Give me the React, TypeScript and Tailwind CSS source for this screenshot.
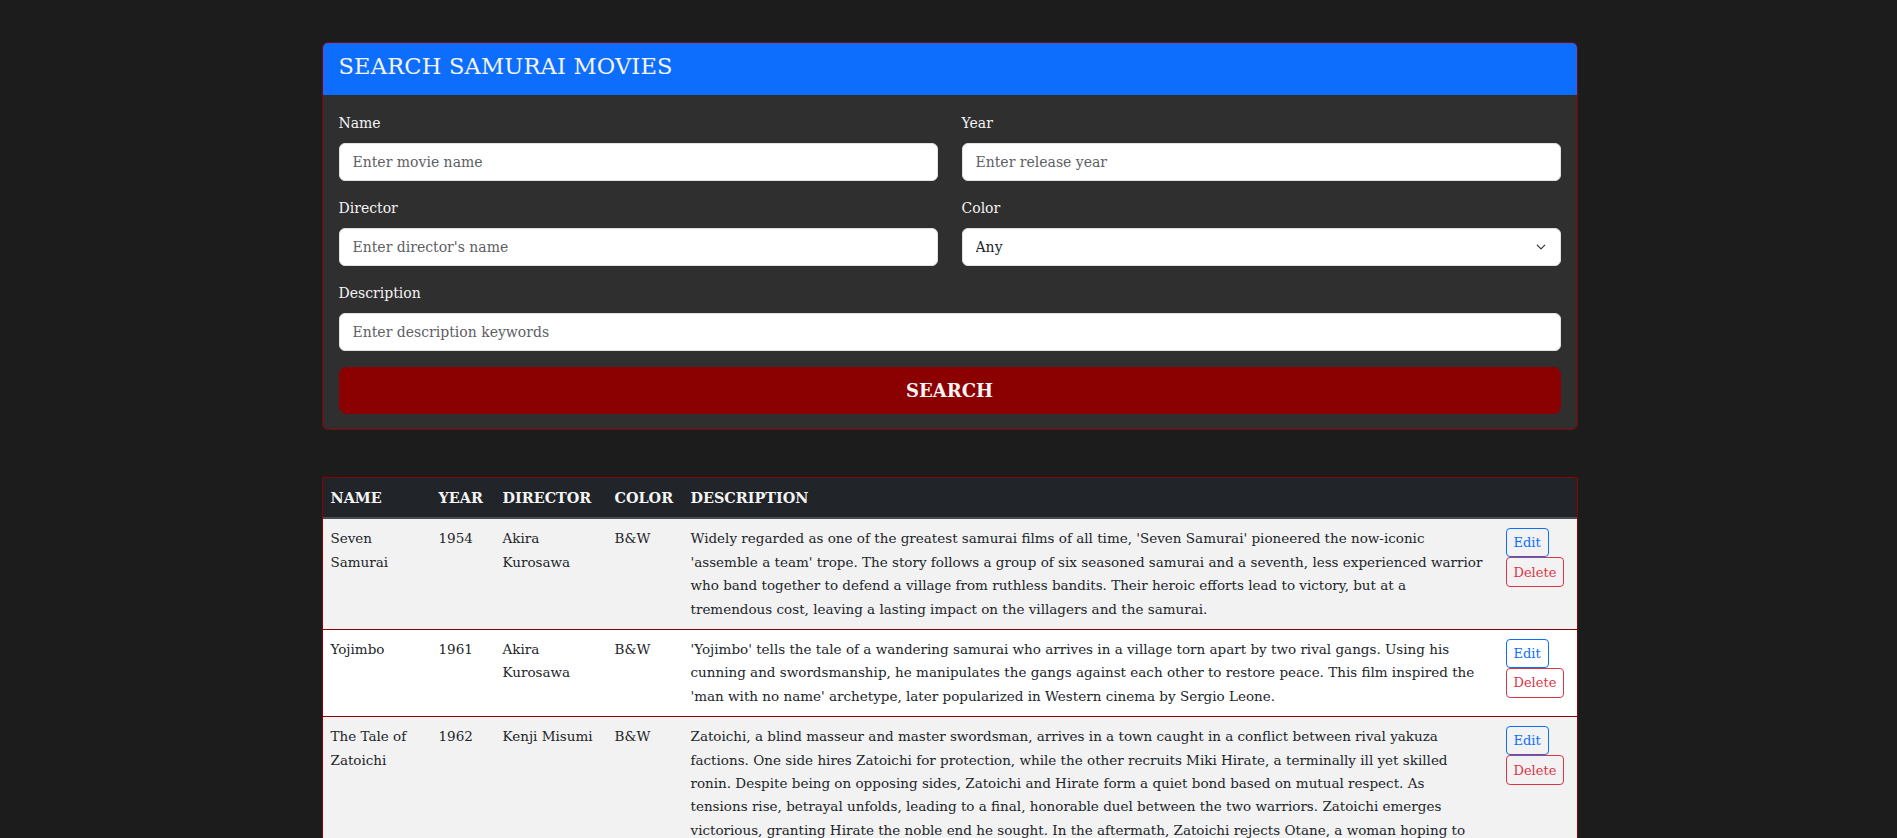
import React from "react";

const font = { fontFamily: '"DejaVu Serif", Georgia, serif' };

type Movie = { name: string; year: string; director: string; color: string; lines: string[] };

const movies: Movie[] = [
  {
    name: "Seven Samurai",
    year: "1954",
    director: "Akira Kurosawa",
    color: "B&W",
    lines: [
      "Widely regarded as one of the greatest samurai films of all time, 'Seven Samurai' pioneered the now-iconic",
      "'assemble a team' trope. The story follows a group of six seasoned samurai and a seventh, less experienced warrior",
      "who band together to defend a village from ruthless bandits. Their heroic efforts lead to victory, but at a",
      "tremendous cost, leaving a lasting impact on the villagers and the samurai.",
    ],
  },
  {
    name: "Yojimbo",
    year: "1961",
    director: "Akira Kurosawa",
    color: "B&W",
    lines: [
      "'Yojimbo' tells the tale of a wandering samurai who arrives in a village torn apart by two rival gangs. Using his",
      "cunning and swordsmanship, he manipulates the gangs against each other to restore peace. This film inspired the",
      "'man with no name' archetype, later popularized in Western cinema by Sergio Leone.",
    ],
  },
  {
    name: "The Tale of Zatoichi",
    year: "1962",
    director: "Kenji Misumi",
    color: "B&W",
    lines: [
      "Zatoichi, a blind masseur and master swordsman, arrives in a town caught in a conflict between rival yakuza",
      "factions. One side hires Zatoichi for protection, while the other recruits Miki Hirate, a terminally ill yet skilled",
      "ronin. Despite being on opposing sides, Zatoichi and Hirate form a quiet bond based on mutual respect. As",
      "tensions rise, betrayal unfolds, leading to a final, honorable duel between the two warriors. Zatoichi emerges",
      "victorious, granting Hirate the noble end he sought. In the aftermath, Zatoichi rejects Otane, a woman hoping to",
      "follow him, and leaves the town alone to continue his wandering life.",
    ],
  },
];

function Field({ label, placeholder }: { label: string; placeholder: string }) {
  return (
    <div className="flex flex-col">
      <label className="text-[14px] leading-[23px] text-[#f4f4f4] mb-[8px]">{label}</label>
      <input
        placeholder={placeholder}
        className="h-[38px] w-full rounded-[6px] border border-[#dee2e6] bg-white px-[13px] text-[14px] text-[#212529] placeholder:text-[#5d6064] outline-none"
        style={font}
      />
    </div>
  );
}

export default function App() {
  return (
    <div className="min-h-screen bg-[#1c1c1c] pt-[42px] pb-10" style={font}>
      <div className="mx-auto w-[1256px] translate-x-[1px]">
        <div className="overflow-hidden rounded-[6px] border border-[#8b0000] bg-[#2f2f2f]">
          <div className="flex h-[52px] items-center bg-[#0d6efd] px-[16px] pb-[6px]">
            <h1 className="text-[22.5px] leading-[30px] text-[#f4f4f4] tracking-[0.2px]">SEARCH SAMURAI MOVIES</h1>
          </div>
          <div className="px-[16px] pt-[17px] pb-[15px]">
            <div className="grid grid-cols-2 gap-x-[24px] gap-y-[16px]">
              <Field label="Name" placeholder="Enter movie name" />
              <Field label="Year" placeholder="Enter release year" />
              <Field label="Director" placeholder="Enter director's name" />
              <div className="flex flex-col">
                <label className="text-[14px] leading-[23px] text-[#f4f4f4] mb-[8px]">Color</label>
                <div className="relative">
                  <select
                    className="h-[38px] w-full appearance-none rounded-[6px] border border-[#dee2e6] bg-white px-[13px] text-[14px] text-[#212529] outline-none"
                    style={font}
                    defaultValue="Any"
                  >
                    <option>Any</option>
                    <option>Color</option>
                    <option>B&amp;W</option>
                  </select>
                  <svg
                    className="pointer-events-none absolute right-[14px] top-[14px]"
                    width="12"
                    height="10"
                    viewBox="0 0 16 16"
                    fill="none"
                    stroke="#343a40"
                    strokeWidth="2"
                    strokeLinecap="round"
                    strokeLinejoin="round"
                  >
                    <path d="m2 5 6 6 6-6" />
                  </svg>
                </div>
              </div>
              <div className="col-span-2">
                <Field label="Description" placeholder="Enter description keywords" />
              </div>
            </div>
            <button
              className="mt-[16px] h-[47px] w-full rounded-[8px] bg-[#8b0000] text-[18px] font-bold text-[#f4f4f4]"
              style={font}
            >
              SEARCH
            </button>
          </div>
        </div>

        <div className="mt-[47px] border border-[#8b0000]">
          <table className="w-full table-fixed border-collapse text-[13.5px] leading-[23.4px]">
            <colgroup>
              <col className="w-[108px]" />
              <col className="w-[64px]" />
              <col className="w-[112px]" />
              <col className="w-[76px]" />
              <col />
              <col className="w-[79px]" />
            </colgroup>
            <thead>
              <tr className="bg-[#212529] border-b-2 border-[#4a4e53]">
                {["NAME", "YEAR", "DIRECTOR", "COLOR", "DESCRIPTION", ""].map((h, i) => (
                  <th key={i} className="px-[8px] py-[8px] text-left font-bold text-[14.4px] whitespace-nowrap text-[#f4f4f4]">
                    {h}
                  </th>
                ))}
              </tr>
            </thead>
            <tbody>
              {movies.map((m, i) => (
                <tr
                  key={m.name}
                  className={`${i % 2 === 0 ? "bg-[#f2f2f2]" : "bg-white"} border-b border-[#8b0000] text-[#212529] align-top`}
                >
                  <td className="px-[8px] py-[8px]">{m.name}</td>
                  <td className="px-[8px] py-[8px]">{m.year}</td>
                  <td className="px-[8px] py-[8px]">{m.director}</td>
                  <td className="px-[8px] py-[8px]">{m.color}</td>
                  <td className="px-[8px] py-[8px]">
                    {m.lines.map((l, j) => (
                      <div key={j} className="whitespace-nowrap">
                        {l}
                      </div>
                    ))}
                  </td>
                  <td className="px-[8px] py-[9px]">
                    <div className="flex flex-col items-start">
                      <button
                        className="h-[29px] rounded-[4px] border border-[#0d6efd] px-[7px] text-[13px] text-[#0d6efd]"
                        style={font}
                      >
                        Edit
                      </button>
                      <button
                        className="h-[30px] rounded-[4px] border border-[#dc3545] px-[7px] text-[13px] text-[#dc3545]"
                        style={font}
                      >
                        Delete
                      </button>
                    </div>
                  </td>
                </tr>
              ))}
            </tbody>
          </table>
        </div>
      </div>
    </div>
  );
}
